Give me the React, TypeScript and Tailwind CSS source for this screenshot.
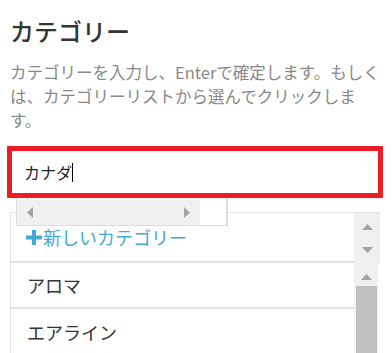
import React from "react";

const jp = { fontFamily: '"Noto Sans CJK JP", "Noto Sans", sans-serif' };

const TriUp = () => (
  <svg width="11" height="6" viewBox="0 0 11 6">
    <path d="M5.5 0L11 6H0z" fill="#a3a3a3" />
  </svg>
);

const TriDown = () => (
  <svg width="11" height="6" viewBox="0 0 11 6">
    <path d="M0 0h11L5.5 6z" fill="#a3a3a3" />
  </svg>
);

const App: React.FC = () => {
  const items = [
    { label: "アロマ", h: "h-[46px]" },
    { label: "エアライン", h: "h-[48px]" },
  ];

  return (
    <div
      className="w-[392px] h-[353px] overflow-hidden bg-white px-[10px] pt-[16px]"
      style={jp}
    >
      <h2 className="text-[24px] leading-[30px] font-medium text-[#333333]">カテゴリー</h2>
      <p className="mt-[14px] text-[16.5px] leading-[24px] text-[#888888]">
        カテゴリーを入力し、Enterで確定します。もしくは、カテゴリーリストから選んでクリックします。
      </p>

      <div className="relative mt-[14px]">
        {/* Input with highlight */}
        <div className="relative z-30 ml-[-3px] w-[376px] h-[52px] border-[5px] border-[#ee1c25] bg-white flex items-center pl-[12px]">
          <span className="text-[16px] text-[#222222]">カナダ</span>
          <span className="inline-block w-px h-[19px] bg-black" />
        </div>

        {/* Autocomplete popup */}
        <div className="absolute z-20 left-[6px] top-[45px] w-[212px] h-[35px] bg-white border border-[#d9dee2] border-r-2 flex flex-col">
          <div className="h-[8px] relative">
            <div className="absolute left-[10px] top-0 w-px h-[8px] bg-[#c9c9c9]" />
          </div>
          <div className="flex h-[25px]">
            <div className="w-[183px] bg-[#f0f0f0] flex items-center justify-between px-[10px]">
              <svg width="6" height="11" viewBox="0 0 6 11">
                <path d="M6 0v11L0 5.5z" fill="#a3a3a3" />
              </svg>
              <svg width="6" height="11" viewBox="0 0 6 11">
                <path d="M0 0l6 5.5L0 11z" fill="#a3a3a3" />
              </svg>
            </div>
            <div className="flex-1 bg-white" />
          </div>
        </div>

        {/* Category list */}
        <div className="mt-[14px] w-[370px] flex border-t border-l border-[#dfe3e8]">
          <div className="flex-1 flex flex-col">
            <div className="h-[50px] flex items-center pl-[15px] text-[18px] text-[#45a8d6] border-b-2 border-[#dfe3e8]">
              <svg width="16" height="15" viewBox="0 0 16 15" className="mr-[1px]">
                <path d="M6 0h4v5.5h6v4h-6V15H6V9.5H0v-4h6z" fill="#45a8d6" />
              </svg>
              新しいカテゴリー
            </div>
            {items.map((it) => (
              <div
                key={it.label}
                className={`${it.h} flex items-center pl-[16px] text-[18px] text-[#333333] border-b-2 border-[#dfe3e8]`}
              >
                {it.label}
              </div>
            ))}
          </div>
          <div className="w-[26px] flex flex-col">
            <div className="h-[50px] bg-[#f0f0f0] flex flex-col items-center justify-between pt-[11px] pb-[10px]">
              <TriUp />
              <TriDown />
            </div>
            <div className="flex-1 w-[24px] bg-[#f0f0f0] flex flex-col items-center pt-[11px]">
              <TriUp />
              <div className="mt-[6px] w-[21px] h-[80px] bg-[#c1c1c1]" />
            </div>
          </div>
        </div>
      </div>
    </div>
  );
};

export default App;
